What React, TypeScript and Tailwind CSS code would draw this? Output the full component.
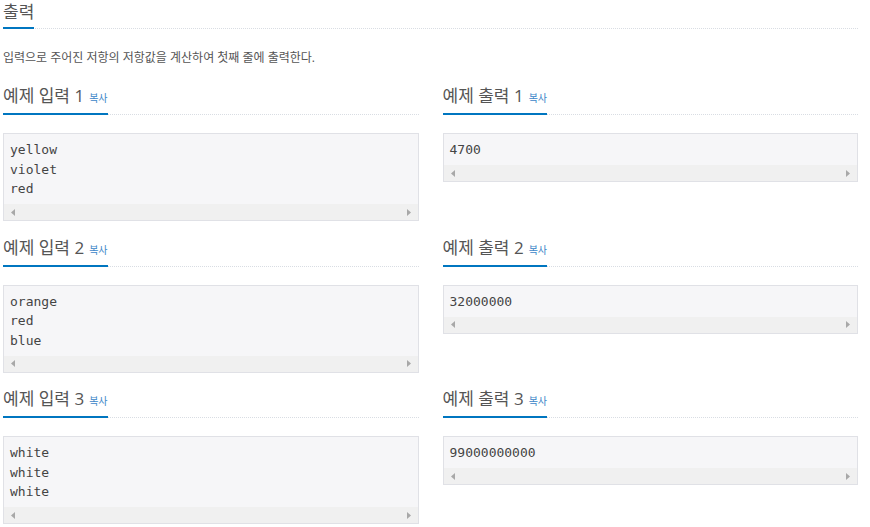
const samples = [
  { input: ["yellow", "violet", "red"], output: ["4700"] },
  { input: ["orange", "red", "blue"], output: ["32000000"] },
  { input: ["white", "white", "white"], output: ["99000000000"] },
];

const Heading = ({ title, copy }: { title: string; copy?: boolean }) => (
  <div className="flex border-b border-dotted border-[#d9dde3]">
    <div className="-mb-px flex items-baseline border-b-2 border-[#0076c0] pb-[5px] leading-[20px]">
      <span className="text-[17px] text-[#555]">{title}</span>
      {copy && <span className="ml-[5px] text-[10px] text-[#3b86c8]">복사</span>}
    </div>
  </div>
);

const SampleBox = ({ lines }: { lines: string[] }) => (
  <div className="border border-[#e0e1e6] bg-[#f6f6f8]">
    <pre className="px-[6px] pt-[6px] pb-[5.5px] font-['DejaVu_Sans_Mono',monospace] text-[13px] leading-[19.5px] text-[#444]">
      {lines.join("\n")}
    </pre>
    <div className="flex h-4 items-center justify-between bg-[#f0f0f0] px-[7px]">
      <svg width="4" height="7" viewBox="0 0 4 7">
        <path d="M4 0 L0 3.5 L4 7 Z" fill="#a8a8a8" />
      </svg>
      <svg width="4" height="7" viewBox="0 0 4 7">
        <path d="M0 0 L4 3.5 L0 7 Z" fill="#a8a8a8" />
      </svg>
    </div>
  </div>
);

export default function App() {
  return (
    <div className="min-h-[527px] w-[870px] bg-white pl-[3px] pt-[2px] font-['Open_Sans','Noto_Sans_CJK_KR',sans-serif]">
      <div className="w-[855px]">
        <Heading title="출력" />
        <p className="mt-[19px] text-[12px] leading-[20px] text-[#555]">
          입력으로 주어진 저항의 저항값을 계산하여 첫째 줄에 출력한다.
        </p>
        <div className="mt-[18px] grid grid-cols-2 gap-x-6 gap-y-[16.5px]">
          {samples.map((s, i) => (
            <div key={i} className="contents">
              <div>
                <Heading title={`예제 입력 ${i + 1}`} copy />
                <div className="mt-[18px]">
                  <SampleBox lines={s.input} />
                </div>
              </div>
              <div>
                <Heading title={`예제 출력 ${i + 1}`} copy />
                <div className="mt-[18px]">
                  <SampleBox lines={s.output} />
                </div>
              </div>
            </div>
          ))}
        </div>
      </div>
    </div>
  );
}
